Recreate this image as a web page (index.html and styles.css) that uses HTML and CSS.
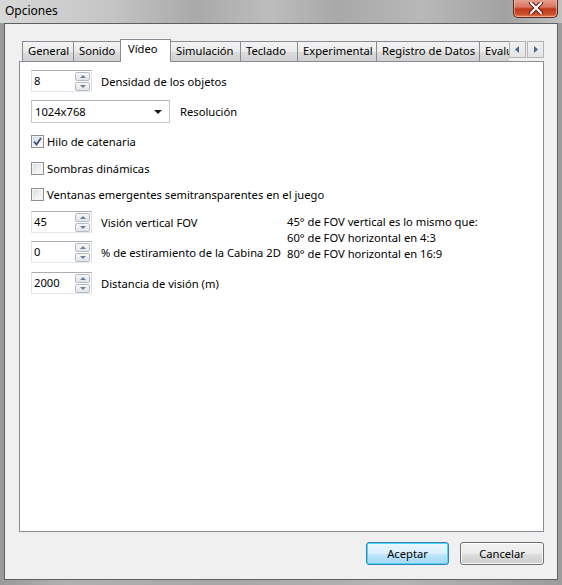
FILE: index.html
```html
<!DOCTYPE html>
<html lang="es">
  <head>
    <meta charset="UTF-8" />
    <title>Opciones</title>
    <link rel="stylesheet" href="styles.css">
  </head>

  <body>
    <div class="window">
      <div class="titlebar">
        <span class="title">Opciones</span>
        <div class="close-btn">
          <svg width="16" height="12" viewBox="0 0 16 12">
            <path d="M3 1 L13 11 M13 1 L3 11" stroke="#5a1a10" stroke-width="4" stroke-linecap="round" />
            <path d="M3 1 L13 11 M13 1 L3 11" stroke="#ffffff" stroke-width="2.2" stroke-linecap="round" />
          </svg>
        </div>
      </div>

      <div class="client">
        <div class="tab-strip">
          <div class="tab t-general">General</div>
          <div class="tab t-sonido">Sonido</div>
          <div class="tab t-video active">Vídeo</div>
          <div class="tab t-sim">Simulación</div>
          <div class="tab t-teclado">Teclado</div>
          <div class="tab t-exp">Experimental</div>
          <div class="tab t-reg">Registro de Datos</div>
          <div class="tab t-eval">Evalu</div>
          <div class="tab-scroll">
            <div class="scroll-btn">
              <svg width="5" height="7" viewBox="0 0 5 7"><path d="M4 0 L0 3.5 L4 7 Z" fill="#4a6a94" /></svg>
            </div>
            <div class="scroll-btn">
              <svg width="5" height="7" viewBox="0 0 5 7"><path d="M1 0 L5 3.5 L1 7 Z" fill="#4a6a94" /></svg>
            </div>
          </div>
        </div>

        <div class="panel">
          <div class="row r-density">
            <div class="spinner">
              <span class="spin-value">8</span>
              <div class="spin-btns">
                <div class="spin-btn"><i class="arrow-up"></i></div>
                <div class="spin-btn"><i class="arrow-down"></i></div>
              </div>
            </div>
            <span class="label">Densidad de los objetos</span>
          </div>

          <div class="row r-res">
            <div class="combo">
              <span>1024x768</span>
              <i class="combo-arrow"></i>
            </div>
            <span class="label label-res">Resolución</span>
          </div>

          <div class="row check-row r-c1">
            <div class="checkbox checked">
              <svg width="9" height="9" viewBox="0 0 9 9"><path d="M1 4.5 L3.5 7.5 L8 1" fill="none" stroke="#3b4f83" stroke-width="1.8" /></svg>
            </div>
            <span class="label">Hilo de catenaria</span>
          </div>

          <div class="row check-row r-c2">
            <div class="checkbox"></div>
            <span class="label">Sombras dinámicas</span>
          </div>

          <div class="row check-row r-c3">
            <div class="checkbox"></div>
            <span class="label">Ventanas emergentes semitransparentes en el juego</span>
          </div>

          <div class="fov-block">
            <div class="fov-controls">
              <div class="row r-fov">
                <div class="spinner">
                  <span class="spin-value">45</span>
                  <div class="spin-btns">
                    <div class="spin-btn"><i class="arrow-up"></i></div>
                    <div class="spin-btn"><i class="arrow-down"></i></div>
                  </div>
                </div>
                <span class="label">Visión vertical FOV</span>
              </div>

              <div class="row r-stretch">
                <div class="spinner">
                  <span class="spin-value">0</span>
                  <div class="spin-btns">
                    <div class="spin-btn"><i class="arrow-up"></i></div>
                    <div class="spin-btn"><i class="arrow-down"></i></div>
                  </div>
                </div>
                <span class="label">% de estiramiento de la Cabina 2D</span>
              </div>

              <div class="row r-dist">
                <div class="spinner">
                  <span class="spin-value">2000</span>
                  <div class="spin-btns">
                    <div class="spin-btn"><i class="arrow-up"></i></div>
                    <div class="spin-btn"><i class="arrow-down"></i></div>
                  </div>
                </div>
                <span class="label">Distancia de visión (m)</span>
              </div>
            </div>

            <div class="fov-info">
              <div>45° de FOV vertical es lo mismo que:</div>
              <div>60° de FOV horizontal en 4:3</div>
              <div>80° de FOV horizontal en 16:9</div>
            </div>
          </div>
        </div>

        <div class="buttons">
          <button class="btn default">Aceptar</button>
          <button class="btn">Cancelar</button>
        </div>
      </div>
    </div>
  </body>
</html>
```

FILE: styles.css
```css
* {
  margin: 0;
  padding: 0;
  box-sizing: border-box;
}

body {
  font-family: "Noto Sans", "Open Sans", sans-serif;
  font-size: 11.2px;
  color: #000000;
  background-color: #a4a4a4;
  width: 562px;
  height: 585px;
  overflow: hidden;
}

.window {
  width: 562px;
  height: 585px;
  display: flex;
  flex-direction: column;
  background: linear-gradient(90deg, #9a9a9a 0%, #b0b0b0 12%, #a6a6a6 40%, #b4b4b4 70%, #9c9c9c 100%);
}

/* title bar */
.titlebar {
  height: 23px;
  display: flex;
  justify-content: space-between;
  align-items: flex-start;
  padding-left: 5px;
  padding-right: 4px;
  background: linear-gradient(90deg, #d8d8d8 0%, #c4c4c4 20%, #a9a9a9 35%, #bdbdbd 48%, #a8a8a8 60%, #b8b8b8 75%, #a2a2a2 90%, #c0c0c0 100%);
}

.title {
  line-height: 22px;
  font-size: 12px;
}

.close-btn {
  width: 45px;
  height: 19px;
  margin-top: -1px;
  border: 1px solid #5b2a20;
  border-top: none;
  border-radius: 0 0 5px 5px;
  background: linear-gradient(180deg, #e8a493 0%, #d7765e 45%, #c2391a 55%, #c9502d 85%, #e08a62 100%);
  box-shadow: inset 0 0 0 1px rgba(255, 210, 190, 0.5);
  display: flex;
  justify-content: center;
  align-items: center;
}

/* client area of the dialog */
.client {
  height: 557px;
  margin: 0 4px;
  border: 1px solid #606060;
  background-color: #f0f0f0;
  padding: 16px 13px 0 14px;
  display: flex;
  flex-direction: column;
}

.tab-strip {
  display: flex;
  align-items: flex-end;
  height: 21px;
  padding-left: 3px;
  position: relative;
  z-index: 1;
}

.tab {
  height: 20px;
  border: 1px solid #898c95;
  border-right: none;
  border-bottom: none;
  background: linear-gradient(180deg, #f3f3f3 0%, #ebebeb 50%, #dddddd 51%, #cfcfcf 100%);
  padding-left: 5px;
  line-height: 18px;
  white-space: nowrap;
  overflow: hidden;
  flex-shrink: 0;
}

.tab.active {
  height: 23px;
  margin-bottom: -1px;
  background: #ffffff;
  border-right: 1px solid #898c95;
  line-height: 18px;
  padding-left: 7px;
}

.t-general { width: 51px; }
.t-sonido { width: 47px; }
.t-video { width: 51px; }
.t-sim { width: 69px; border-left: none; }
.t-teclado { width: 57px; }
.t-exp { width: 79px; }
.t-reg { width: 103px; }
.t-eval { width: 30px; }

.tab-scroll {
  display: flex;
  gap: 1px;
  margin-bottom: 3px;
}

.scroll-btn {
  width: 17px;
  height: 17px;
  border: 1px solid #b4b4b4;
  background: linear-gradient(180deg, #f2f2f2 0%, #e4e4e4 100%);
  display: flex;
  justify-content: center;
  align-items: center;
}

/* tab page */
.panel {
  width: 525px;
  height: 471px;
  border: 1px solid #898c95;
  background-color: #ffffff;
  padding: 8px 11px;
}

.row {
  display: flex;
  align-items: center;
}

.label {
  margin-left: 9px;
  white-space: nowrap;
}

.spinner {
  width: 61px;
  height: 22px;
  flex-shrink: 0;
  border: 1px solid #abadb3;
  border-right-color: #dbdfe6;
  border-bottom-color: #e3e9ef;
  border-left-color: #e2e3ea;
  display: flex;
  justify-content: space-between;
  align-items: center;
  padding: 0 1px 0 2px;
  background: #ffffff;
}

.spin-value {
  line-height: 18px;
}

.spin-btns {
  width: 15px;
  display: flex;
  flex-direction: column;
  gap: 1px;
}

.spin-btn {
  height: 9px;
  border: 1px solid #b7bcc4;
  border-radius: 2px;
  background: linear-gradient(180deg, #f6f6f6 0%, #e2e5ea 100%);
  display: flex;
  justify-content: center;
  align-items: center;
}

.arrow-up,
.arrow-down {
  width: 0;
  height: 0;
  border-left: 3px solid transparent;
  border-right: 3px solid transparent;
}

.arrow-up {
  border-bottom: 3px solid #6b7f99;
}

.arrow-down {
  border-top: 3px solid #6b7f99;
}

.r-res {
  margin-top: 8px;
}

.combo {
  width: 139px;
  height: 23px;
  flex-shrink: 0;
  border: 1px solid #c5c5c5;
  border-top-color: #b0b0b0;
  display: flex;
  justify-content: space-between;
  align-items: center;
  padding: 0 7px 0 3px;
  background: #ffffff;
}

.combo-arrow {
  width: 0;
  height: 0;
  border-left: 4px solid transparent;
  border-right: 4px solid transparent;
  border-top: 4px solid #1a1a1a;
}

.label-res {
  margin-left: 10px;
}

.check-row {
  height: 16px;
}

.check-row .label {
  margin-left: 3px;
}

.r-c1 { margin-top: 10px; }
.r-c2 { margin-top: 11px; }
.r-c3 { margin-top: 10px; }

.checkbox {
  width: 13px;
  height: 13px;
  flex-shrink: 0;
  border: 1px solid #8e8f8f;
  background: linear-gradient(135deg, #d9dbde 0%, #f2f2f2 60%, #fbfbfb 100%);
  box-shadow: inset 0 0 0 1px #f4f4f4;
  display: flex;
  justify-content: center;
  align-items: center;
}

.checkbox.checked {
  background: linear-gradient(135deg, #cfd6e8 0%, #eef1f8 60%, #fbfbfb 100%);
}

/* field of view controls with their note */
.fov-block {
  display: grid;
  grid-template-columns: 256px 1fr;
  margin-top: 9px;
}

.r-stretch { margin-top: 8px; }
.r-dist { margin-top: 9px; }

.fov-info {
  line-height: 16px;
  padding-top: 3px;
  white-space: nowrap;
}

/* dialog buttons */
.buttons {
  display: flex;
  justify-content: flex-end;
  gap: 11px;
  margin-top: 10px;
}

.btn {
  width: 84px;
  height: 23px;
  font-family: inherit;
  font-size: 11.2px;
  border: 1px solid #707070;
  border-radius: 3px;
  background: linear-gradient(180deg, #f2f2f2 0%, #ebebeb 50%, #dddddd 51%, #cfcfcf 100%);
  box-shadow: inset 0 0 0 1px #fbfbfb;
}

.btn.default {
  width: 83px;
  border-color: #3c7fb1;
  background: linear-gradient(180deg, #eaf6fd 0%, #d9f0fc 50%, #bee6fd 51%, #a7d9f5 100%);
  box-shadow: inset 0 0 0 1px #48d9f9;
}
```
